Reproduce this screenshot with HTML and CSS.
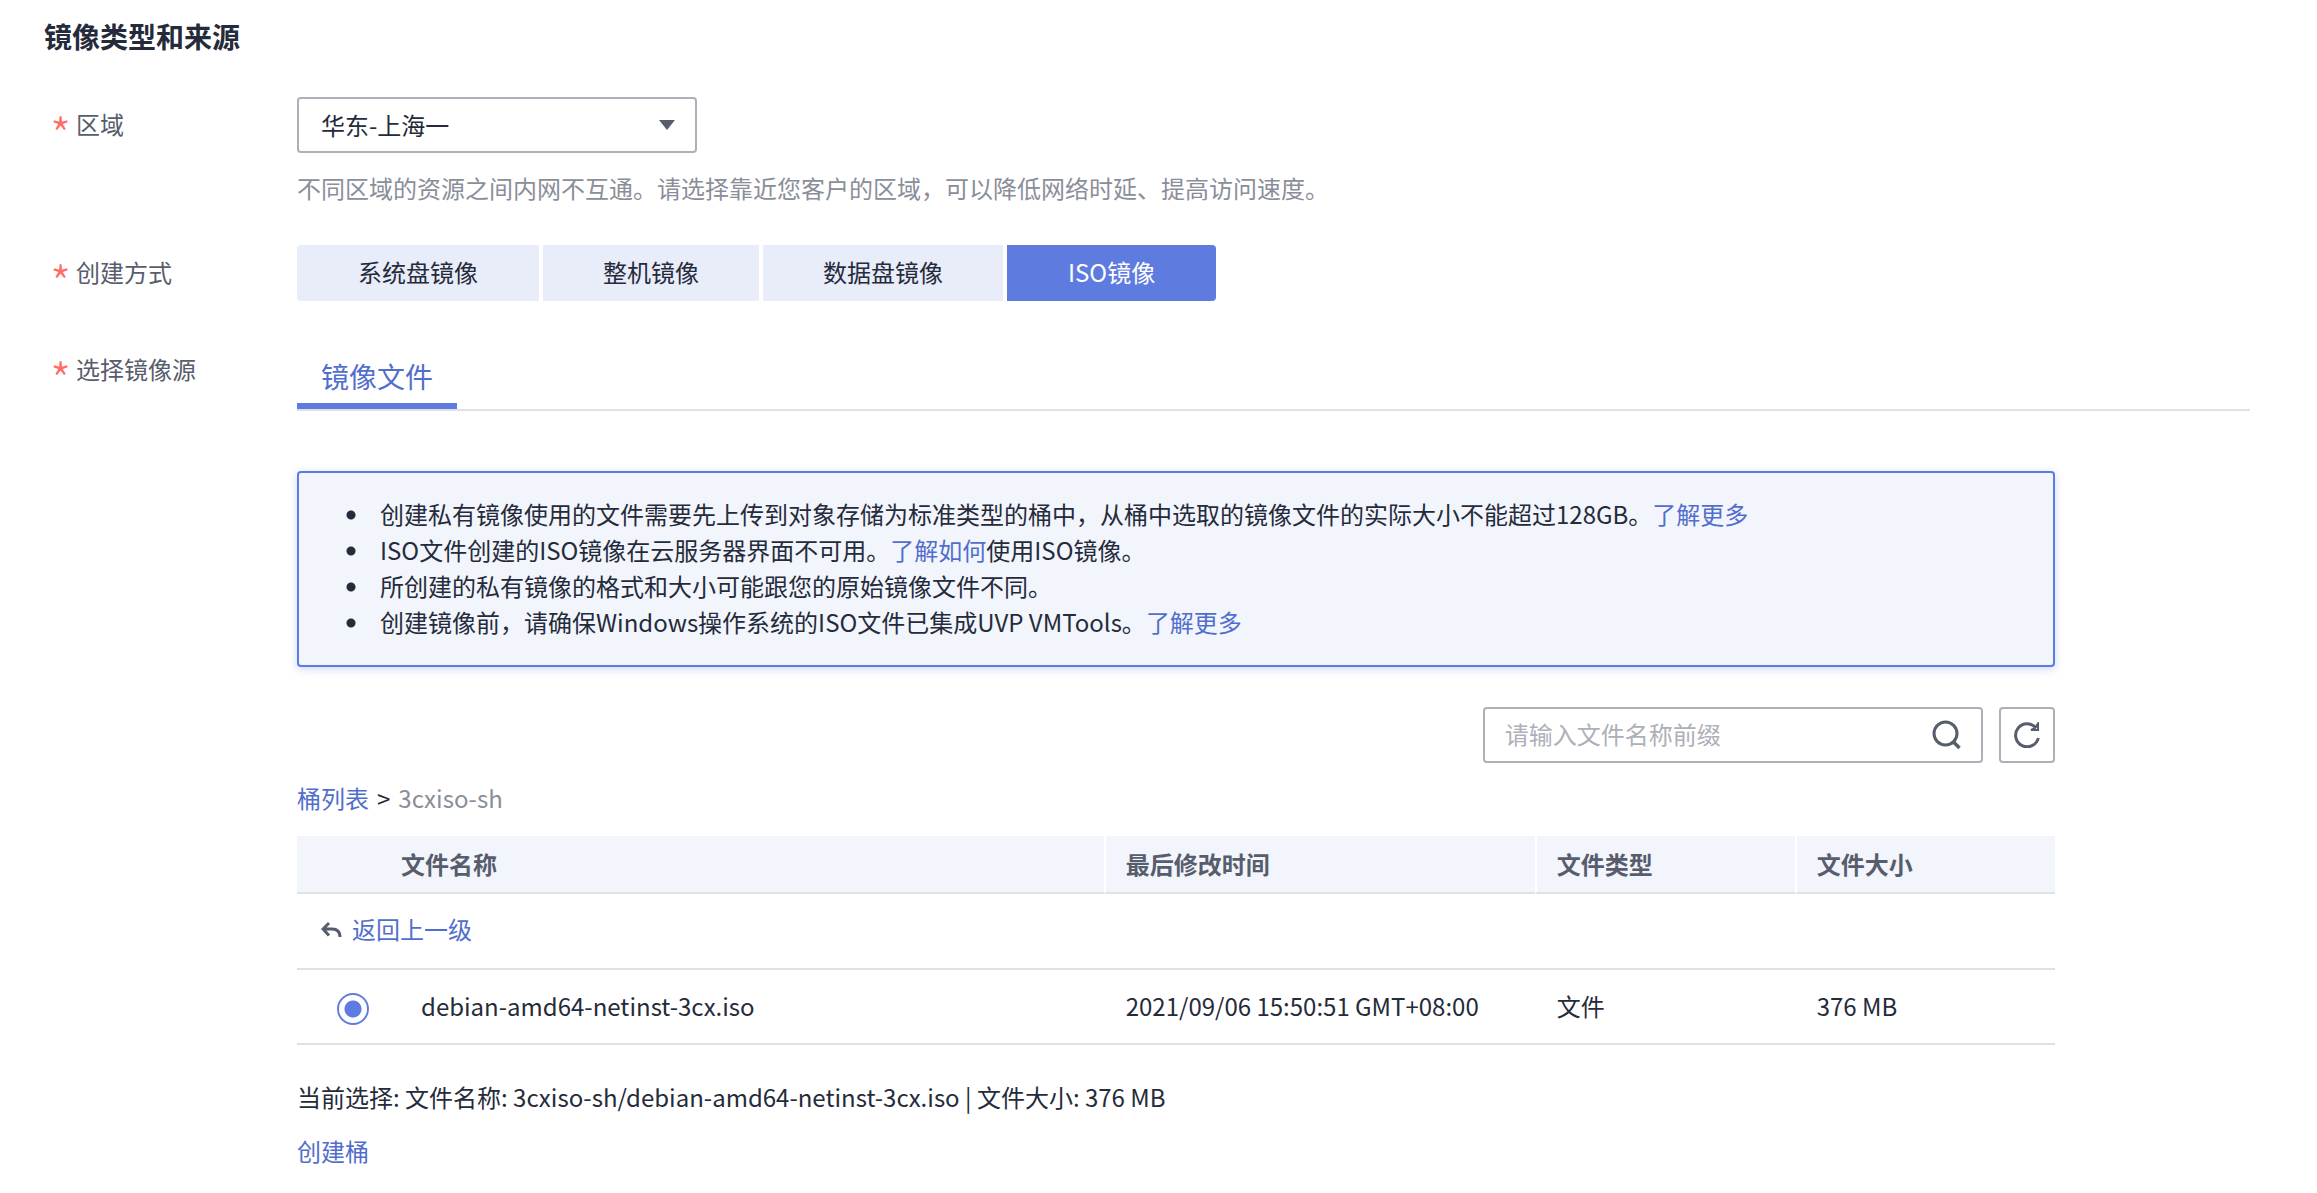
FILE: index.html
```html
<!DOCTYPE html>
<html lang="zh-CN">
<head>
  <meta charset="UTF-8">
  <meta name="viewport" content="width=device-width, initial-scale=1.0">
  <title>镜像类型和来源</title>
  <link rel="stylesheet" href="styles.css">
</head>
<body>
  <h1>镜像类型和来源</h1>

  <!-- 区域 -->
  <div class="row row-region">
    <label class="label" for="region"><span class="required">*</span>区域</label>
    <div class="content">
      <div class="select">
        <select id="region">
          <option>华东-上海一</option>
        </select>
        <svg class="caret" viewBox="0 0 16 10"><path d="M0 0h16L8 10z"/></svg>
      </div>
      <p class="hint">不同区域的资源之间内网不互通。请选择靠近您客户的区域，可以降低网络时延、提高访问速度。</p>
    </div>
  </div>

  <!-- 创建方式 -->
  <div class="row row-type">
    <span class="label" id="type-label"><span class="required">*</span>创建方式</span>
    <div class="content types" role="group" aria-labelledby="type-label">
      <button type="button">系统盘镜像</button>
      <button type="button">整机镜像</button>
      <button type="button">数据盘镜像</button>
      <button type="button" class="active">ISO镜像</button>
    </div>
  </div>

  <!-- 选择镜像源 -->
  <div class="row">
    <span class="label"><span class="required">*</span>选择镜像源</span>
    <div class="content">
      <div class="tabs">
        <button type="button" class="tab">镜像文件</button>
      </div>

      <div class="source">
        <ul class="notice">
          <li>创建私有镜像使用的文件需要先上传到对象存储为标准类型的桶中，从桶中选取的镜像文件的实际大小不能超过128GB。<a href="#">了解更多</a></li>
          <li>ISO文件创建的ISO镜像在云服务器界面不可用。<a href="#">了解如何</a>使用ISO镜像。</li>
          <li>所创建的私有镜像的格式和大小可能跟您的原始镜像文件不同。</li>
          <li>创建镜像前，请确保Windows操作系统的ISO文件已集成UVP VMTools。<a href="#">了解更多</a></li>
        </ul>

        <div class="toolbar">
          <div class="search">
            <input type="text" placeholder="请输入文件名称前缀" aria-label="请输入文件名称前缀">
            <button type="button" aria-label="搜索">
              <svg viewBox="0 0 30 30"><circle cx="14.500" cy="13.500" r="11.500"/><path d="M22.500 22l6 6" stroke-width="3.500"/></svg>
            </button>
          </div>
          <button type="button" class="refresh" aria-label="刷新">
            <svg viewBox="0 0 26 26"><path d="M24.300 16A11.500 11.500 0 1 1 22 6"/><path d="M24 1.500v6.500h-7l4-2z" stroke-width="2"/></svg>
          </button>
        </div>

        <div class="path"><a href="#">桶列表</a><span>&gt;</span><span class="bucket">3cxiso-sh</span></div>

        <table>
          <thead>
            <tr>
              <th class="col-radio"></th>
              <th class="col-name">文件名称</th>
              <th class="col-time">最后修改时间</th>
              <th class="col-type">文件类型</th>
              <th class="col-size">文件大小</th>
            </tr>
          </thead>
          <tbody>
            <tr>
              <td class="up" colspan="5">
                <a class="back" href="#">
                  <svg viewBox="0 0 22 18"><path d="M8 3L2 9l6 6.500M2.500 9H11q8 0 8 8"/></svg>
                  返回上一级
                </a>
              </td>
            </tr>
            <tr>
              <td class="radio"><input type="radio" id="file" name="file" checked></td>
              <td class="name"><label for="file">debian-amd64-netinst-3cx.iso</label></td>
              <td>2021/09/06 15:50:51 GMT+08:00</td>
              <td>文件</td>
              <td>376 MB</td>
            </tr>
          </tbody>
        </table>

        <p class="current">当前选择: 文件名称: 3cxiso-sh/debian-amd64-netinst-3cx.iso | 文件大小: 376 MB</p>
        <a href="#">创建桶</a>
      </div>
    </div>
  </div>
</body>
</html>
```
FILE: styles.css
```css
* {
  box-sizing: border-box;
}
body {
  margin: 0;
  padding: 17px 67px 18px 44px;
  background: #fff;
  color: #252b3a;
  font-family: "Noto Sans CJK SC", "Noto Sans", sans-serif;
  font-size: 24px;
  line-height: 36px;
}
h1 {
  margin: 0 0 42px;
  font-size: 28px;
  line-height: 38px;
}
p {
  margin: 0;
}
a {
  color: #526ecc;
  text-decoration: none;
}
button,
input,
select {
  font: inherit;
  color: inherit;
}
button {
  border: none;
  padding: 0;
  background: none;
  cursor: pointer;
}
svg {
  display: block;
  fill: none;
  stroke: #575d6c;
  stroke-width: 3;
}

/* Строки формы */
.row {
  display: flex;
}
.row-region {
  margin-bottom: 39px;
}
.row-type {
  margin-bottom: 50px;
}
.label {
  display: flex;
  flex: none;
  width: 253px;
  height: 36px;
  padding-left: 6px;
  color: #575d6c;
}
.row-region .label,
.row-type .label {
  margin-top: 9px;
}
.required {
  width: 26px;
  color: #ff6b66;
  font-size: 48px;
  font-weight: 300;
  line-height: 54px;
}
.content {
  flex: 1;
  min-width: 0;
}
.select {
  position: relative;
  width: 400px;
}
.select select {
  appearance: none;
  display: block;
  width: 100%;
  height: 56px;
  padding: 0 48px 0 22px;
  border: 2px solid #adb0b8;
  border-radius: 4px;
  background: #fff;
}
.caret {
  position: absolute;
  top: 23px;
  right: 22px;
  width: 16px;
  height: 10px;
  fill: #575d6c;
  stroke: none;
  pointer-events: none;
}
.hint {
  margin-top: 17px;
  color: #8a8e99;
}
.types {
  display: flex;
  gap: 4px;
}
.types button {
  height: 56px;
  padding: 0 60px 2px;
  background: #e9edfa;
}
.types button:first-child {
  padding: 0 61px 2px;
  border-radius: 4px 0 0 4px;
}
.types button:last-child {
  padding: 0 61px 2px;
  border-radius: 0 4px 4px 0;
}
.types .active {
  background: #5e7ce0;
  color: #fff;
}
.tabs {
  display: flex;
  border-bottom: 2px solid #dfe1e6;
}
.tab {
  height: 58px;
  padding: 0 24px 2px;
  border-bottom: 6px solid #5e7ce0;
  color: #526ecc;
  font-size: 28px;
}

/* 镜像文件 */
.source {
  width: 90%;
  padding-top: 60px;
}
.notice {
  margin: 0 0 40px;
  padding: 23px 40px 25px 47px;
  border: 2px solid #5e7ce0;
  border-radius: 4px;
  background: #f2f5fc;
  box-shadow: 0 2px 8px rgba(94, 124, 224, 0.3);
  list-style: none;
}
.notice li {
  padding-left: 34px;
  background: radial-gradient(circle at 5px 19px, #252b3a 4px, transparent 5px);
}
.toolbar {
  display: flex;
  justify-content: flex-end;
  gap: 16px;
}
.search {
  display: flex;
  align-items: center;
  width: 500px;
  height: 56px;
  padding: 0 20px;
  border: 2px solid #adb0b8;
  border-radius: 4px;
}
.search input {
  flex: 1;
  min-width: 0;
  padding: 0 0 2px;
  border: none;
  outline: none;
}
.search input::placeholder {
  color: #adb0b8;
  opacity: 1;
}
.search svg {
  width: 30px;
  height: 30px;
}
.refresh {
  display: flex;
  align-items: center;
  justify-content: center;
  width: 56px;
  height: 56px;
  border: 2px solid #adb0b8;
  border-radius: 4px;
}
.refresh svg {
  width: 26px;
  height: 26px;
}
.path {
  display: flex;
  gap: 8px;
  margin: 17px 0 20px;
}
.bucket {
  color: #8a8e99;
}
table {
  width: 100%;
  border-collapse: separate;
  border-spacing: 0;
  table-layout: fixed;
}
th {
  height: 58px;
  padding: 0 20px;
  border-bottom: 2px solid #dfe1e6;
  background: #f2f5fc;
  color: #575d6c;
  text-align: left;
}
th + th + th {
  border-left: 2px solid #fff;
}
.col-radio {
  width: 84px;
}
.col-time {
  width: 431px;
}
.col-type,
.col-size {
  width: 260px;
}
td {
  height: 75px;
  padding: 0 22px 2px;
  border-bottom: 2px solid #dfe1e6;
}
td.up {
  height: 76px;
  padding: 0 24px 6px;
}
.back {
  display: inline-flex;
  align-items: center;
  gap: 9px;
}
.back svg {
  width: 22px;
  height: 18px;
}
td.radio {
  padding: 4px 0 0 40px;
}
td.name {
  padding-left: 40px;
}
.radio input {
  appearance: none;
  display: block;
  width: 32px;
  height: 32px;
  margin: 0;
  border: 2px solid #5e7ce0;
  border-radius: 50%;
  background: radial-gradient(circle, #5e7ce0 8px, #fff 9px);
}
.current {
  margin: 34px 0 18px;
}
```
